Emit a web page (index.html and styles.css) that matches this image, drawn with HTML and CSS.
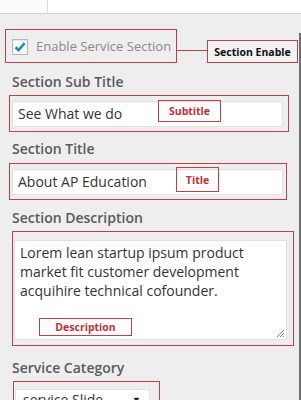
FILE: index.html
```html
<!DOCTYPE html>
<html>
<head>
<meta charset="utf-8">
<link rel="stylesheet" href="styles.css">
</head>
<body>
<div class="topbar"><div class="topcell"></div></div>
<div class="frame">
  <div class="main">
    <div class="enable-wrap">
      <div class="enable-box">
        <span class="checkbox">
          <svg width="14" height="14" viewBox="0 0 14 14"><path d="M2.5 7.2 L5.6 10.2 L11.6 3.2" fill="none" stroke="#1e8cbe" stroke-width="2.6"/></svg>
        </span>
        <span class="enable-text">Enable Service Section</span>
      </div>
      <span class="connector"></span>
      <span class="tag tag-enable">Section Enable</span>
    </div>

    <div class="label l-sub">Section Sub Title</div>
    <div class="redbox rb-sub">
      <div class="input">See What we do</div>
      <span class="tag tag-sub">Subtitle</span>
    </div>

    <div class="label l-title">Section Title</div>
    <div class="redbox rb-title">
      <div class="input">About AP Education</div>
      <span class="tag tag-title">Title</span>
    </div>

    <div class="label l-desc">Section Description</div>
    <div class="redbox rb-desc">
      <div class="textarea">Lorem lean startup ipsum product market fit customer development acquihire technical cofounder.
        <svg class="grip" width="9" height="9" viewBox="0 0 9 9"><path d="M1 8 L8 1 M4 8 L8 4 M7 8 L8 7" stroke="#777" stroke-width="1"/></svg>
      </div>
      <span class="tag tag-desc">Description</span>
    </div>

    <div class="label l-cat">Service Category</div>
    <div class="redbox rb-cat">
      <div class="select"><span>service Slide</span><span class="arrow">▼</span></div>
    </div>
  </div>
  <div class="edge"></div>
</div>
</body>
</html>
```

FILE: styles.css
```css
html, body {
  margin: 0;
  padding: 0;
}
body {
  width: 301px;
  height: 400px;
  overflow: hidden;
  background: #eeeeee;
  font-family: "Open Sans", sans-serif;
}
.topbar {
  height: 13px;
  background: #ffffff;
  border-bottom: 1px solid #d6d6d6;
}
.topcell {
  width: 47px;
  height: 13px;
  border-right: 1px solid #dcdcdc;
  background: #fbfbfb;
}
.frame {
  display: flex;
}
.main {
  flex: 1;
  position: relative;
}
.edge {
  width: 2px;
  margin-top: 19px;
  background: #6e6e6e;
  height: 400px;
}
.enable-wrap {
  position: relative;
  margin-top: 15px;
  height: 34px;
}
.enable-box {
  margin-left: 5px;
  width: 170px;
  height: 32px;
  border: 1px solid #c0404a;
  display: flex;
  align-items: center;
  box-sizing: content-box;
}
.checkbox {
  width: 14px;
  height: 14px;
  margin-left: 6px;
  margin-top: 1px;
  border: 1px solid #b4b9be;
  background: #fff;
  box-shadow: inset 0 1px 2px rgba(0,0,0,.1);
  display: inline-flex;
}
.enable-text {
  margin-left: 8px;
  font-size: 13px;
  color: #8a8a8a;
  white-space: nowrap;
}
.connector {
  position: absolute;
  left: 177px;
  top: 21px;
  width: 30px;
  height: 1px;
  background: #c0404a;
}
.tag {
  position: absolute;
  border: 1px solid #c0404a;
  font-weight: 700;
  color: #c0303a;
  font-size: 10.5px;
  display: flex;
  align-items: center;
  justify-content: center;
  box-sizing: border-box;
  white-space: nowrap;
}
.tag-enable {
  left: 207px;
  top: 11px;
  width: 91px;
  height: 23px;
  color: #111;
  background: #f2f2f2;
}
.label {
  font-size: 14px;
  font-weight: 600;
  color: #5a5a5a;
  margin-left: 12px;
  line-height: 20px;
}
.l-sub { margin-top: 9px; }
.redbox {
  position: relative;
  border: 1px solid #c0404a;
  box-sizing: border-box;
}
.rb-sub {
  margin-left: 9px;
  width: 280px;
  height: 37px;
  margin-top: 3px;
  padding: 5px 5px 0 2px;
}
.input {
  height: 26px;
  background: #fff;
  border: 1px solid #e2e2e2;
  box-sizing: border-box;
  font-size: 14px;
  color: #333;
  padding-left: 5px;
  line-height: 24px;
  box-shadow: inset 0 1px 2px rgba(0,0,0,.05);
}
.tag-sub {
  left: 148px;
  top: 4px;
  width: 63px;
  height: 22px;
}
.l-title { margin-top: 7px; }
.rb-title {
  margin-left: 9px;
  width: 278px;
  height: 37px;
  margin-top: 4px;
  padding: 5px 3px 0 2px;
}
.tag-title {
  left: 166px;
  top: 3px;
  width: 43px;
  height: 25px;
}
.l-desc { margin-top: 8px; }
.rb-desc {
  margin-left: 12px;
  width: 282px;
  height: 115px;
  margin-top: 3px;
  padding: 8px 6px 0 1px;
}
.textarea {
  position: relative;
  height: 100px;
  background: #fff;
  border: 1px solid #e2e2e2;
  box-sizing: border-box;
  font-size: 14px;
  line-height: 19px;
  color: #333;
  padding: 2px 6px 0 5px;
}
.grip {
  position: absolute;
  right: 1px;
  bottom: 1px;
}
.tag-desc {
  left: 26px;
  top: 86px;
  width: 93px;
  height: 18px;
}
.l-cat { margin-top: 12px; }
.rb-cat {
  margin-left: 13px;
  width: 147px;
  height: 40px;
  margin-top: 3px;
  padding: 7px 9px 0 1px;
}
.select {
  height: 30px;
  background: #fff;
  border: 1px solid #e2e2e2;
  box-sizing: border-box;
  font-size: 14px;
  line-height: 18px;
  color: #333;
  display: flex;
  justify-content: space-between;
  align-items: flex-start;
  padding: 1px 8px 0 7px;
}
.arrow {
  font-size: 9px;
  line-height: 18px;
  color: #222;
}
```
